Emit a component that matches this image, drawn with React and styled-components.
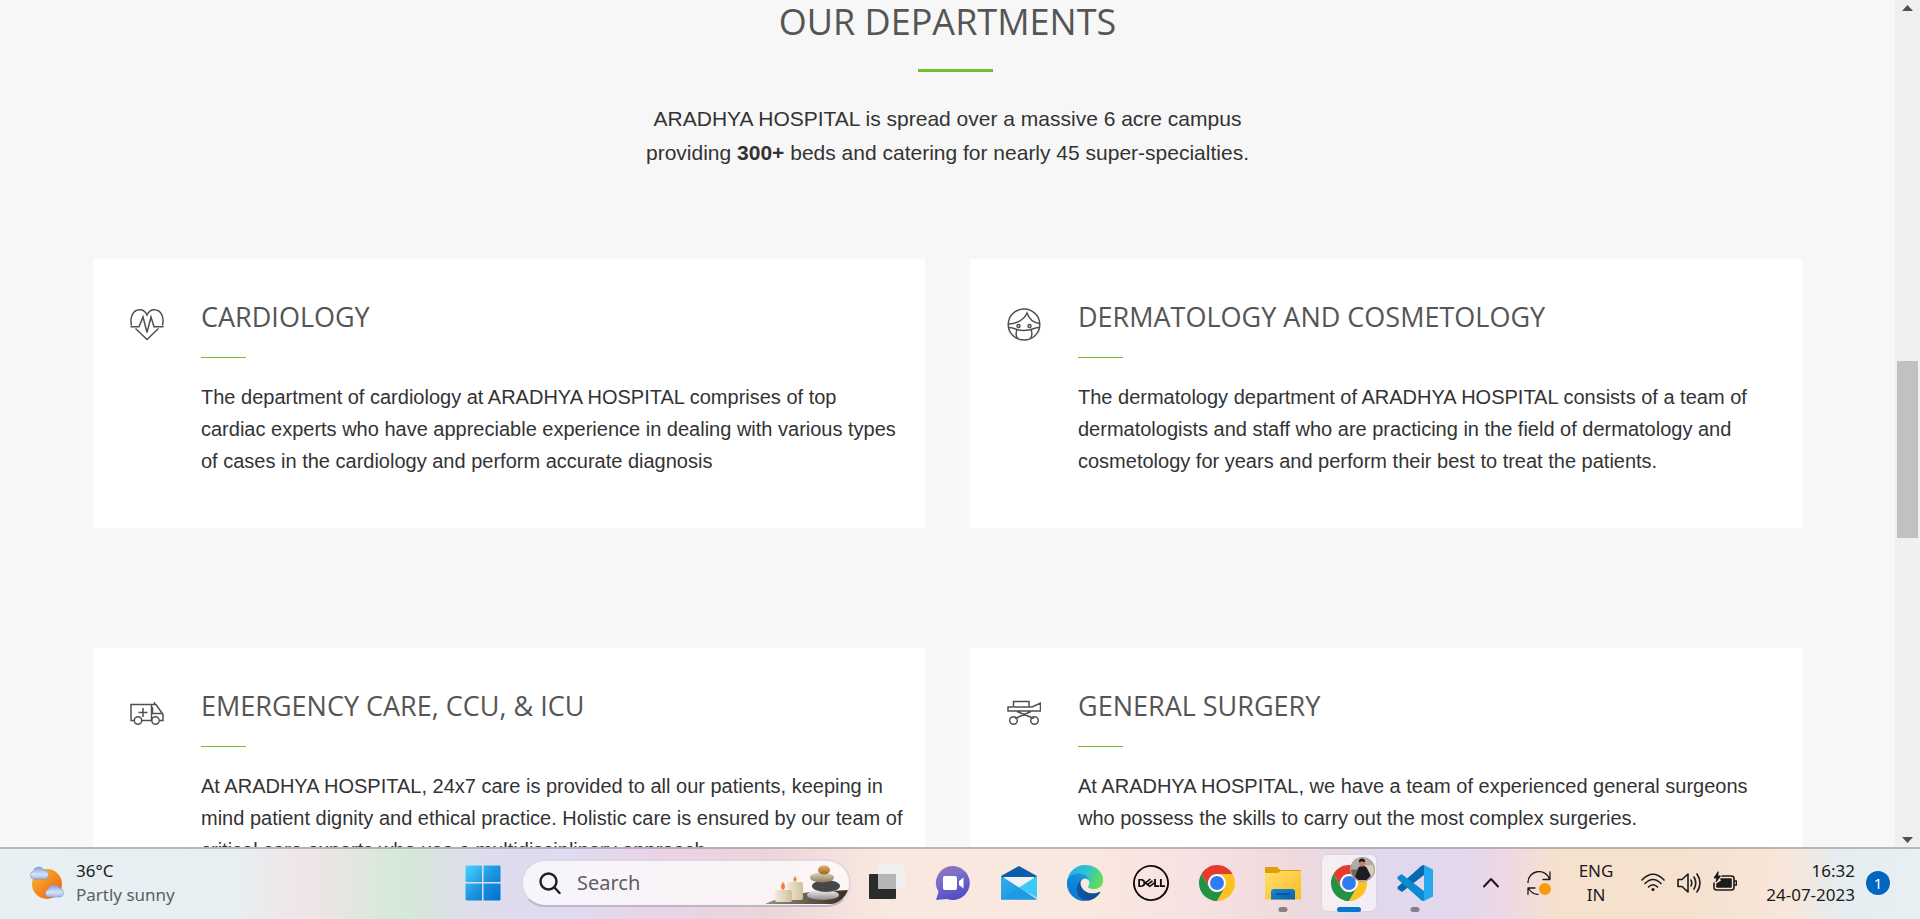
import React from "react";
import styled, { createGlobalStyle } from "styled-components";
import { SiDell } from "react-icons/si";

const GlobalStyle = createGlobalStyle`
  * { box-sizing: border-box; }
  html, body { margin: 0; padding: 0; }
  body { font-family: "Liberation Sans", Arial, sans-serif; color: #333; background: #f7f7f7; }
  h1, h2, p { margin: 0; font-weight: 400; }
  button { border: 0; padding: 0; background: none; color: inherit; font: inherit; }
  svg { display: block; flex: none; }
`;

const Screen = styled.div`
  height: 100vh;
  display: flex;
  flex-direction: column;
  overflow: hidden;
`;

const Viewport = styled.div`
  flex: 1;
  min-height: 0;
  display: flex;
`;

const Page = styled.main`
  flex: 1;
  min-width: 0;
  overflow: hidden;
  background: #f7f7f7;
`;

const ScrollTrack = styled.div`
  width: 25px;
  background: #f0f0f0;
  display: flex;
  flex-direction: column;
  align-items: center;
`;

const ScrollArrow = styled.button`
  height: 15px;
  width: 25px;
  display: grid;
  place-items: center;
`;

const ScrollSpace = styled.div`
  flex: ${(p) => p.$grow};
`;

const ScrollThumb = styled.div`
  width: 21px;
  height: 177px;
  background: #c1c1c1;
`;

const Intro = styled.header`
  text-align: center;
`;

const Heading = styled.h1`
  font-family: "Open Sans", sans-serif;
  font-size: 36px;
  line-height: 44px;
  color: #555;
`;

const HeadingRule = styled.div`
  padding: 25px 0 30px 16px;
  &::after {
    content: "";
    display: block;
    width: 75px;
    height: 3px;
    margin: 0 auto;
    background: #72bf2c;
  }
`;

const Lead = styled.p`
  max-width: 660px;
  margin: 0 auto;
  font-size: 21px;
  line-height: 34px;
`;

const Departments = styled.section`
  display: grid;
  grid-template-columns: 1fr 1fr;
  gap: 120px 45px;
  padding: 0 93px;
  margin-top: 89px;
`;

const Card = styled.article`
  display: grid;
  grid-template-columns: 34px 1fr;
  column-gap: 37px;
  align-items: start;
  padding: 40px 21px 51px 37px;
  background: #fff;
`;

const CardIcon = styled.svg`
  width: 34px;
  height: 34px;
  margin-top: 9px;
  fill: none;
  stroke: #505050;
  stroke-width: 1.5;
`;

const CardTitle = styled.h2`
  font-family: "Open Sans", sans-serif;
  font-size: 27px;
  line-height: 36px;
  color: #555;
  &::after {
    content: "";
    display: block;
    width: 45px;
    height: 1px;
    margin: 22px 0 23px;
    background: #72bf2c;
  }
`;

const CardText = styled.p`
  font-size: 20px;
  line-height: 32px;
`;

const Taskbar = styled.footer`
  display: grid;
  grid-template-columns: 1fr auto 1fr;
  align-items: center;
  height: 72px;
  padding-bottom: 2px;
  border-top: 2px solid rgba(130, 130, 140, 0.5);
  background: linear-gradient(90deg, #e8f0f3 0, #e8eff2 12%, #f1e4e7 16%, #d3ead8 21%, #dfdcee 25%, #e0dbf0 30%, #ead3e8 34%, #ecd5d9 40%, #f9e8df 46%, #f9e8df 57%, #f8e1e3 62%, #efdadc 67%, #e1d8ec 72%, #e3d8ee 76%, #edd6e8 78%, #f6e1cf 81%, #f6e1cf 88%, #f8e6d9 93%, #e5edf1 96%, #e8f0f3 100%);
  font-family: "Noto Sans", sans-serif;
  font-size: 17px;
  line-height: 24px;
  color: #1b1b1b;
`;

const Weather = styled.button`
  justify-self: start;
  display: flex;
  align-items: center;
  gap: 11px;
  margin-left: 29px;
  text-align: left;
`;

const Muted = styled.span`
  display: block;
  color: #5c5f62;
`;

const Pinned = styled.nav`
  display: flex;
  align-items: center;
  padding-right: 22px;
`;

const AppButton = styled.button`
  position: relative;
  width: 66px;
  height: 68px;
  display: grid;
  place-items: center;
`;

const ActiveTile = styled.span`
  position: absolute;
  inset: 5px;
  border-radius: 6px;
  background: rgba(255, 255, 255, 0.55);
  border: 1px solid rgba(150, 130, 150, 0.25);
`;

const AppIcon = styled.svg`
  position: relative;
  width: 36px;
  height: 36px;
`;

const RunMark = styled.span`
  position: absolute;
  bottom: 5px;
  left: 50%;
  transform: translateX(-50%);
  width: ${(p) => (p.$active ? 24 : 9)}px;
  height: 5px;
  border-radius: 3px;
  background: ${(p) => (p.$active ? "#0a74cf" : "#878083")};
`;

const SearchBox = styled.label`
  display: flex;
  align-items: center;
  width: 330px;
  height: 48px;
  margin: 0 3px 0 5px;
  padding-left: 16px;
  border-radius: 24px;
  border: 2px solid rgba(160, 140, 180, 0.28);
  border-bottom-color: rgba(130, 120, 150, 0.5);
  background: rgba(255, 255, 255, 0.72);
  overflow: hidden;
`;

const SearchInput = styled.input`
  flex: 1;
  min-width: 0;
  margin-left: 14px;
  border: 0;
  outline: 0;
  background: transparent;
  font: 20px/28px "Noto Sans", sans-serif;
  color: #333;
  &::placeholder { color: #5f5c63; opacity: 1; }
`;

const Tray = styled.div`
  display: flex;
  align-items: center;
  height: 68px;
  padding-right: 30px;
`;

const TrayButton = styled.button`
  width: ${(p) => p.$w}px;
  height: 48px;
  display: flex;
  align-items: center;
  justify-content: center;
  gap: 12px;
`;

const Clock = styled.button`
  margin-left: auto;
  text-align: right;
`;

const Line = styled.span`
  display: block;
`;

const Badge = styled.span`
  width: 24px;
  height: 24px;
  margin-left: 11px;
  border-radius: 50%;
  background: #0067c0;
  color: #fff;
  font-size: 15px;
  text-align: center;
`;

const drawings = {
  heart: (
    <>
      <path d="M1.5 17.5C-.5 9 3 2 9.500 1.800C13 1.700 15.500 3.500 17 7C18.500 3.500 21 1.700 24.500 1.800C31 2 34.500 9 32.500 17.500M5.500 20.500L17 31.500L28.500 20.500" />
      <path d="M.5 18.800H9L13 9L17 24.500L21 9L24 18.800H33.500" />
    </>
  ),
  face: (
    <>
      <ellipse cx="17" cy="16.500" rx="15.800" ry="15.500" />
      <path d="M1.500 16C9 16 17 12 20 5C22 11 26 14.500 32.500 15.500M2 19.500C7 19.500 9 22.500 17 22.500S27 19.500 32 19.500M10 21.500C8.500 25 9 28 10.500 30.500M24 21.500C25.500 25 25 28 23.500 30.500" />
      <circle cx="11.500" cy="18" r="1.500" />
      <circle cx="22.500" cy="18" r="1.500" />
    </>
  ),
  ambulance: (
    <>
      <path d="M4 23.500H1V7.500H21.500V23.500M12 23.500H21.500M24.500 7.500V5M21.500 7.500H26L33 17.500V23.500H30M22.500 10V16.500H32M22 23.500H12" />
      <circle cx="8" cy="23.500" r="3.700" />
      <circle cx="25.500" cy="23.500" r="3.700" />
      <path d="M13 11V20M8.500 15.500H17.500" />
    </>
  ),
  stretcher: (
    <>
      <path d="M6 10H1V14H33.500V6L25 10H22.500M6.500 10V4.500H22V10H6.500M10 14.500L27 21.500M24 14.500L8 21.500" />
      <circle cx="6.500" cy="23.500" r="3.800" />
      <circle cx="27.500" cy="23.500" r="3.800" />
    </>
  ),
};

const departments = [
  {
    icon: "heart",
    title: "CARDIOLOGY",
    text: "The department of cardiology at ARADHYA HOSPITAL comprises of top cardiac experts who have appreciable experience in dealing with various types of cases in the cardiology and perform accurate diagnosis",
  },
  {
    icon: "face",
    title: "DERMATOLOGY AND COSMETOLOGY",
    text: "The dermatology department of ARADHYA HOSPITAL consists of a team of dermatologists and staff who are practicing in the field of dermatology and cosmetology for years and perform their best to treat the patients.",
  },
  {
    icon: "ambulance",
    title: "EMERGENCY CARE, CCU, & ICU",
    text: "At ARADHYA HOSPITAL, 24x7 care is provided to all our patients, keeping in mind patient dignity and ethical practice. Holistic care is ensured by our team of critical care experts who use a multidisciplinary approach",
  },
  {
    icon: "stretcher",
    title: "GENERAL SURGERY",
    text: "At ARADHYA HOSPITAL, we have a team of experienced general surgeons who possess the skills to carry out the most complex surgeries.",
  },
];

const WeatherIcon = () => (
  <svg width="36" height="36" viewBox="0 0 36 36" aria-hidden="true">
    <defs>
      <linearGradient id="sun" x1="0" y1="0" x2="1" y2="1">
        <stop offset="0" stopColor="#f3bd32" />
        <stop offset="1" stopColor="#f25a0c" />
      </linearGradient>
      <linearGradient id="cloud" x1="0" y1="0" x2="0" y2="1">
        <stop offset="0" stopColor="#7f9edc" />
        <stop offset=".6" stopColor="#d9e3fa" />
        <stop offset="1" stopColor="#9fb5ea" />
      </linearGradient>
    </defs>
    <circle cx="18" cy="19" r="15" fill="url(#sun)" />
    <path d="M4 14a4 4 0 0 1 0-7.500A6 6 0 0 1 15 5a4.800 4.800 0 0 1 2 9z" fill="url(#cloud)" stroke="#7c98d6" strokeWidth=".6" />
    <path d="M19 32a4 4 0 0 1 0-7.500A6 6 0 0 1 30 23a4.800 4.800 0 0 1 2 9z" fill="url(#cloud)" stroke="#7c98d6" strokeWidth=".6" />
  </svg>
);

const Windows = () => (
  <AppIcon viewBox="0 0 36 36" aria-hidden="true">
    <defs>
      <linearGradient id="win" x1="0" y1="0" x2="1" y2="1" >
        <stop offset="0" stopColor="#4fd3ff" />
        <stop offset=".5" stopColor="#1b95e0" />
        <stop offset="1" stopColor="#0070cf" />
      </linearGradient>
    </defs>
    <path d="M1.500.5H17V17H.5V1.500zM18.500.5H35L35.500 1.500V17H18.500zM.5 18.500H17V35.500H1.500L.5 34.500zM18.500 18.500H35.500V34.500L34.500 35.500H18.500z" fill="url(#win)" />
  </AppIcon>
);

const SearchScene = () => (
  <svg width="84" height="44" viewBox="0 0 84 44" aria-hidden="true">
    <defs>
      <linearGradient id="wax" x1="0" x2="1"><stop offset="0" stopColor="#f3ead8" /><stop offset="1" stopColor="#cfc09d" /></linearGradient>
      <linearGradient id="tan" x1="0" y1="0" x2="0" y2="1"><stop offset="0" stopColor="#e2d5b9" /><stop offset="1" stopColor="#8d7c5b" /></linearGradient>
      <linearGradient id="amber" x1="0" y1="0" x2="0" y2="1"><stop offset="0" stopColor="#e5ad66" /><stop offset="1" stopColor="#9b6224" /></linearGradient>
      <linearGradient id="pale" x1="0" y1="0" x2="0" y2="1"><stop offset="0" stopColor="#f0f0f0" /><stop offset="1" stopColor="#8c8c8e" /></linearGradient>
      <linearGradient id="slab" x1="0" x2="1"><stop offset="0" stopColor="#96917f" /><stop offset="1" stopColor="#3a2b1c" /></linearGradient>
    </defs>
    <path d="M0 43C10 38 28 33 45 31L84 29C82 38 76 43 66 43z" fill="url(#slab)" />
    <rect x="22" y="21" width="16" height="18" rx="2" fill="url(#wax)" />
    <rect x="10" y="29" width="17" height="12" rx="2" fill="url(#wax)" />
    <path d="M30 15q3 4 0 6q-3-2 0-6zM18 21q4 5 0 8q-4-3 0-8z" fill="#f2793b" stroke="#fbb36b" strokeWidth=".8" />
    <ellipse cx="58" cy="34" rx="16" ry="5" fill="url(#pale)" />
    <ellipse cx="61" cy="25" rx="14" ry="6" fill="#47474a" />
    <ellipse cx="57" cy="16.500" rx="12" ry="5" fill="url(#tan)" />
    <ellipse cx="59" cy="9" rx="6" ry="4.500" fill="url(#amber)" />
  </svg>
);

const TaskView = () => (
  <AppIcon viewBox="0 0 36 36" aria-hidden="true">
    <rect x="0" y="9" width="27" height="25" rx="1" fill="#2b2b2b" />
    <rect x="9" y="0" width="27" height="24" rx="1" fill="#f1f0f0" />
    <rect x="9" y="9" width="18" height="15" fill="#b7b6b6" />
  </AppIcon>
);

const Chat = () => (
  <AppIcon viewBox="0 0 36 36" aria-hidden="true">
    <defs>
      <linearGradient id="chat" x1="0" y1="0" x2=".4" y2="1"><stop offset="0" stopColor="#a070a8" /><stop offset=".4" stopColor="#7a70d0" /><stop offset="1" stopColor="#5450c4" /></linearGradient>
    </defs>
    <path d="M18 1a17 17 0 1 1-6 33L1 35L3.500 27A17 17 0 0 1 18 1z" fill="url(#chat)" />
    <rect x="8" y="11" width="14" height="14" rx="2" fill="#fff" />
    <path d="M24 16L28.500 12.500V23.500L24 20z" fill="#fff" />
  </AppIcon>
);

const Mail = () => (
  <AppIcon viewBox="0 0 36 36" aria-hidden="true">
    <defs>
      <linearGradient id="mail" x1="0" y1="0" x2="1" y2="1"><stop offset="0" stopColor="#31aeea" /><stop offset="1" stopColor="#178fdd" /></linearGradient>
    </defs>
    <path d="M0 11L18 1L36 11V15H0z" fill="#0b5cab" />
    <path d="M3 12H33V20L18 26L3 18z" fill="#f3f2f2" />
    <path d="M0 11L18 22.500L36 34.500H0z" fill="url(#mail)" />
    <path d="M36 11L18 22.500L36 33z" fill="#3ccaf6" />
    <path d="M0 34.500L18 22.500L36 34.500z" fill="#1d9ae3" />
  </AppIcon>
);

const Edge = () => (
  <AppIcon viewBox="0 0 256 256" aria-hidden="true">
    <defs>
      <linearGradient id="e1" x1="0" x2="1"><stop offset="0" stopColor="#0c59a4" /><stop offset="1" stopColor="#114a8b" /></linearGradient>
      <linearGradient id="e2" x1=".8" y1="0" x2=".3" y2="1"><stop offset="0" stopColor="#1b9de2" /><stop offset=".5" stopColor="#0f86d8" /><stop offset="1" stopColor="#0a78d0" /></linearGradient>
      <linearGradient id="e3" x1="0" y1=".3" x2="1" y2=".6"><stop offset="0" stopColor="#2ea9e4" /><stop offset=".5" stopColor="#2fc3cf" /><stop offset="1" stopColor="#68e04c" /></linearGradient>
    </defs>
    <path fill="url(#e1)" d="M231.078 190.540c-3.416 1.780-6.932 3.360-10.540 4.727a101.980 101.980 0 0 1-35.840 6.464c-47.235 0-88.380-32.485-88.380-74.185.125-11.380 6.392-21.810 16.350-27.334-42.723 1.803-53.704 46.330-53.704 72.433 0 73.790 68.023 81.270 82.677 81.270 7.906 0 19.838-2.297 26.992-4.554l1.310-.44a128.040 128.040 0 0 0 66.607-52.818 4.040 4.040 0 0 0-5.472-5.563z" />
    <path fill="url(#e2)" d="M105.726 241.420a79.200 79.200 0 0 1-22.747-21.345 80.910 80.910 0 0 1 29.687-119.873c3.158-1.483 8.580-4.240 15.760-4.098a32.820 32.820 0 0 1 26.024 13.162 31.920 31.920 0 0 1 6.315 18.646c0-.203 24.827-80.530-81.100-80.530-44.526 0-81.100 42.280-81.100 79.263-.19 19.526 4 38.847 12.252 56.544a128.150 128.150 0 0 0 156.508 67.150 75.500 75.500 0 0 1-61.600-8.900z" />
    <path fill="url(#e3)" d="M152.330 149.020c-.8 1.080-3.350 2.550-3.350 5.760 0 2.650 1.730 5.200 4.800 7.340 14.600 10.150 42.150 8.800 42.210 8.800a60.500 60.500 0 0 0 30.750-8.450 62.360 62.360 0 0 0 30.770-53.800c.27-22.600-8.040-37.600-11.400-44.200C224.800 22.600 178.800 0 128.860 0A128 128 0 0 0 0 126.200c.48-36.550 36.800-66.060 80-66.060 3.500 0 23.460.34 42 10.070 16.340 8.580 24.900 18.940 30.850 29.200 6.180 10.670 7.280 24.150 7.280 29.530 0 5.370-2.750 13.340-7.800 20.100z" />
  </AppIcon>
);

const Chrome = () => (
  <AppIcon viewBox="0 0 48 48" aria-hidden="true">
    <path d="M24 12H44.780A24 24 0 0 0 3.220 12L13.600 30A12 12 0 0 1 24 12z" fill="#e33b2e" />
    <path d="M24 12H44.780A24 24 0 0 1 24 48L34.400 30A12 12 0 0 0 24 12z" fill="#fcc31e" />
    <path d="M13.600 30L3.220 12A24 24 0 0 0 24 48L34.400 30A12 12 0 0 1 13.600 30z" fill="#229342" />
    <circle cx="24" cy="24" r="11.500" fill="#fff" />
    <circle cx="24" cy="24" r="9.300" fill="#2f7bf0" />
  </AppIcon>
);

const Avatar = styled.svg`
  position: absolute;
  top: 8px;
  right: 7px;
  width: 25px;
  height: 25px;
`;

const ProfilePhoto = () => (
  <Avatar viewBox="0 0 24 24" aria-hidden="true">
    <defs><clipPath id="av"><circle cx="12" cy="12" r="11.500" /></clipPath></defs>
    <g clipPath="url(#av)">
      <rect width="24" height="24" fill="#b5aaa5" />
      <rect x="15" y="8" width="9" height="11" fill="#d9cdb9" />
      <rect y="12" width="7" height="12" fill="#746a58" />
      <path d="M5 19L8 10Q12 7.500 16 10L20 18L16 22H8z" fill="#1b1c24" />
      <circle cx="11.500" cy="6" r="3" fill="#b98667" />
      <path d="M8.500 5Q8.500 1.500 11.500 1.500T14.500 5L11.500 4z" fill="#1c1715" />
    </g>
    <circle cx="12" cy="12" r="11.500" fill="none" stroke="#aaa3a6" />
  </Avatar>
);

const Folder = () => (
  <AppIcon viewBox="0 0 36 36" aria-hidden="true">
    <defs>
      <linearGradient id="fold" x1="0" y1="0" x2="1" y2="1"><stop offset="0" stopColor="#ffdf70" /><stop offset="1" stopColor="#f7bd1c" /></linearGradient>
      <linearGradient id="dock" x1="0" y1="0" x2="1" y2="1"><stop offset="0" stopColor="#1784d8" /><stop offset="1" stopColor="#0862ae" /></linearGradient>
    </defs>
    <path d="M0 3Q0 2 1 2H12L15 5H35Q36 5 36 6V12H0z" fill="#e0a005" />
    <path d="M0 8H13L16 6H36V34.500H0z" fill="url(#fold)" />
    <path d="M6 34.500V27Q6 24 9 24H27Q30 24 30 27V34.500z" fill="url(#dock)" />
    <path d="M11 29H25" stroke="#0a4a86" strokeWidth="1.500" />
  </AppIcon>
);

const Code = () => (
  <AppIcon viewBox="0 0 36 36" aria-hidden="true">
    <path d="M27 0V10L5 27L.5 24V22L24 1.200Q25.500 0 27 0z" fill="#0668ae" />
    <path d="M.5 12L4.500 9L27 26V36Q25 36 24 35L.5 14z" fill="#0a8bd3" />
    <path d="M27 0L36 4.500V31.500L27 36z" fill="#25a9ee" />
  </AppIcon>
);

const Stroke = ({ w = 24, children }) => (
  <svg width={w} height="24" viewBox={`0 0 ${w} 24`} fill="none" stroke="#1b1b1b" strokeWidth="1.600" strokeLinecap="round" strokeLinejoin="round" aria-hidden="true">
    {children}
  </svg>
);

const apps = [
  { name: "Task view", Icon: TaskView },
  { name: "Chat", Icon: Chat },
  { name: "Mail", Icon: Mail },
  { name: "Microsoft Edge", Icon: Edge },
  { name: "Dell", Icon: () => <SiDell size={36} color="#0b0b0b" /> },
  { name: "Google Chrome", Icon: Chrome },
  { name: "File Explorer", Icon: Folder, running: true },
  { name: "Google Chrome profile", Icon: Chrome, running: true, active: true },
  { name: "Visual Studio Code", Icon: Code, running: true },
];

export default function App() {
  return (
    <Screen>
      <GlobalStyle />
      <Viewport>
        <Page>
          <Intro>
            <Heading>OUR DEPARTMENTS</Heading>
            <HeadingRule />
            <Lead>
              ARADHYA HOSPITAL is spread over a massive 6 acre campus
              <br />
              providing <b>300+</b> beds and catering for nearly 45 super-specialties.
            </Lead>
          </Intro>
          <Departments>
            {departments.map((d) => (
              <Card key={d.title}>
                <CardIcon viewBox="0 0 34 34" aria-hidden="true">{drawings[d.icon]}</CardIcon>
                <div>
                  <CardTitle>{d.title}</CardTitle>
                  <CardText>{d.text}</CardText>
                </div>
              </Card>
            ))}
          </Departments>
        </Page>
        <ScrollTrack>
          <ScrollArrow aria-label="Scroll up">
            <svg width="11" height="6" viewBox="0 0 11 6"><path d="M0 6L5.500 0L11 6z" fill="#505050" /></svg>
          </ScrollArrow>
          <ScrollSpace $grow={346} />
          <ScrollThumb />
          <ScrollSpace $grow={294} />
          <ScrollArrow aria-label="Scroll down">
            <svg width="11" height="6" viewBox="0 0 11 6"><path d="M0 0L5.500 6L11 0z" fill="#505050" /></svg>
          </ScrollArrow>
        </ScrollTrack>
      </Viewport>
      <Taskbar>
        <Weather>
          <WeatherIcon />
          <span>
            <Line>36°C</Line>
            <Muted>Partly sunny</Muted>
          </span>
        </Weather>
        <Pinned aria-label="Apps">
          <AppButton aria-label="Start"><Windows /></AppButton>
          <SearchBox>
            <svg width="22" height="22" viewBox="0 0 22 22" fill="none" stroke="#1f1f1f" strokeWidth="2.400" strokeLinecap="round" aria-hidden="true">
              <circle cx="9.500" cy="9.500" r="8" />
              <path d="M15.500 15.500L20.500 21" />
            </svg>
            <SearchInput type="text" placeholder="Search" aria-label="Search" />
            <SearchScene />
          </SearchBox>
          {apps.map(({ name, Icon, running, active }) => (
            <AppButton key={name} aria-label={name}>
              {active && <ActiveTile />}
              <Icon />
              {active && <ProfilePhoto />}
              {running && <RunMark $active={active} />}
            </AppButton>
          ))}
        </Pinned>
        <Tray>
          <TrayButton $w={42} aria-label="Show hidden icons">
            <Stroke w={18}><path d="M2 15.500L9 8L16 15.500" strokeWidth="2" /></Stroke>
          </TrayButton>
          <TrayButton $w={54} aria-label="Updates">
            <Stroke>
              <path d="M1 11.500A11 10.500 0 0 1 22.500 8M23 .8V8.500H16M1 23.500V17H8M1.500 17.500Q5 23 11 23.500" strokeWidth="1.300" />
              <circle cx="18" cy="18" r="6" fill="#fb9b0b" stroke="none" />
            </Stroke>
          </TrayButton>
          <TrayButton $w={60} aria-label="Keyboard language"><span><Line>ENG</Line><Line>IN</Line></span></TrayButton>
          <TrayButton $w={126} aria-label="Network, volume and battery">
            <Stroke>
              <path d="M1 9Q12-2.500 23 9M4 12.500Q12 4.500 20 12.500M7.500 16Q12 11.500 16.500 16" />
              <circle cx="12" cy="18.500" r="1.600" fill="#1b1b1b" stroke="none" />
            </Stroke>
            <Stroke>
              <path d="M1 8.500H5L11 3V21L5 15.500H1zM14 9Q15.500 12 14 15M17 6Q20.500 12 17 18M20 3Q26 12 20 21" />
            </Stroke>
            <Stroke>
              <path d="M9 5H18.500Q21 5 21 7.500V16.500Q21 19 18.500 19H3.500Q1 19 1 16.500V12M22 10H23.500V14H22" />
              <path d="M8 8H18V16H4L4 13L9 10z" fill="#1b1b1b" />
              <path d="M5 1L1 7H4L3 11L7.500 5H5z" fill="#1b1b1b" strokeWidth="1" />
            </Stroke>
          </TrayButton>
          <Clock><Line>16:32</Line><Line>24-07-2023</Line></Clock>
          <Badge>1</Badge>
        </Tray>
      </Taskbar>
    </Screen>
  );
}
